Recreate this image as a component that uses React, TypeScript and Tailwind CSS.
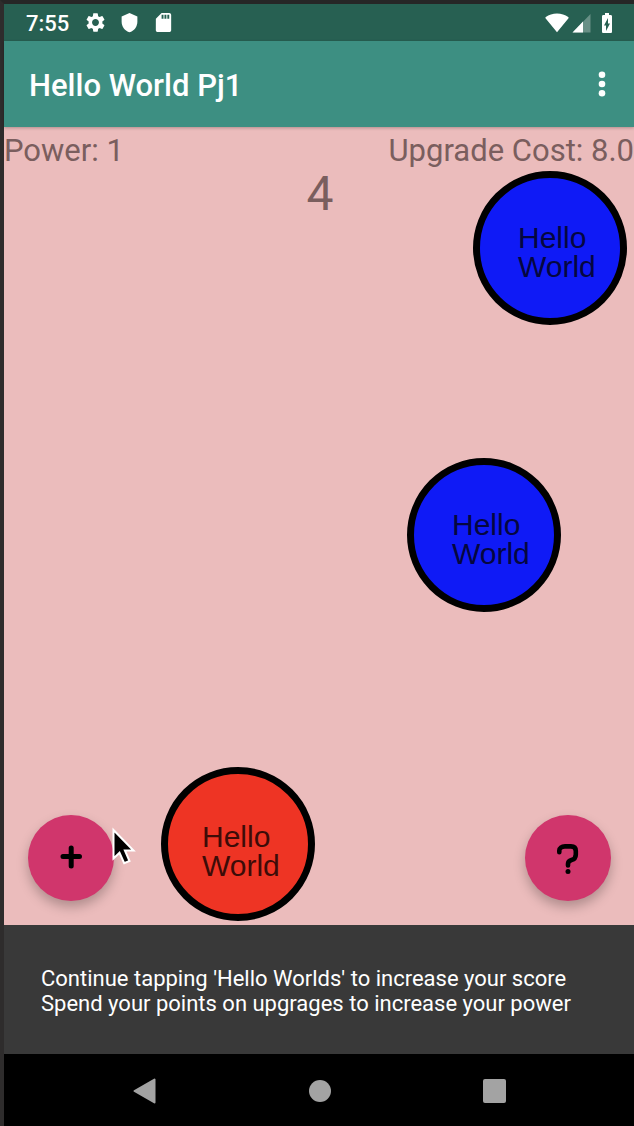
import { useState } from "react";
import { MdBatteryChargingFull, MdSdCard, MdSettings, MdShield } from "react-icons/md";

function WifiIcon() {
  return (
    <svg width="24" height="20" viewBox="0 0 24 20" fill="currentColor" aria-hidden="true">
      <path d="M12 19.2 0.5 5.2C0.2 4.8 0.4 4.4 0.8 4.1 3.8 1.8 7.8 0.6 12 0.6S20.2 1.8 23.2 4.1C23.6 4.4 23.8 4.8 23.5 5.2L12 19.2Z" />
    </svg>
  );
}

function SignalIcon() {
  return (
    <svg width="19" height="20" viewBox="0 0 19 20" fill="currentColor" aria-hidden="true">
      <path d="M0.5 19.5 18.5 1V19.5Z" opacity="0.3" />
      <path d="M0.5 19.5 11 8.4V19.5Z" />
    </svg>
  );
}

function StatusBar() {
  return (
    <div className="flex h-[37px] items-center justify-between bg-[#276052] pr-[15px] pl-[22px] text-white">
      <div className="flex items-center">
        <span className="w-[58px] pt-0.5 text-[22px] leading-7 font-medium">7:55</span>
        <div className="flex items-center gap-3">
          <MdSettings size={23} />
          <MdShield size={21} />
          <MdSdCard size={23} />
        </div>
      </div>
      <div className="flex items-center">
        <WifiIcon />
        <span className="ml-[3px]">
          <SignalIcon />
        </span>
        <MdBatteryChargingFull size={24} className="ml-1" />
      </div>
    </div>
  );
}

function AppBar() {
  return (
    <header className="z-10 flex h-[86px] items-center justify-between bg-[#3d8f82] pr-4 pl-[25px] text-white shadow-[0_1px_3px_rgba(0,0,0,0.25)]">
      <h1 className="pt-1 text-[31px] leading-9 font-medium">Hello World Pj1</h1>
      <button type="button" aria-label="More options" className="flex h-12 w-8 items-center justify-center">
        <svg width="8" height="26" viewBox="0 0 8 26" fill="currentColor" aria-hidden="true">
          <circle cx="4" cy="3.7" r="3.3" />
          <circle cx="4" cy="13" r="3.3" />
          <circle cx="4" cy="22.3" r="3.3" />
        </svg>
      </button>
    </header>
  );
}

function Bubble({ className, onTap }: { className: string; onTap: () => void }) {
  return (
    <button
      type="button"
      onClick={onTap}
      className={`absolute flex size-[154px] items-center rounded-full border-[7px] border-black text-left font-['Liberation_Sans',sans-serif] text-[30px] leading-[29px] ${className}`}
    >
      <span>
        Hello
        <br />
        World
      </span>
    </button>
  );
}

const fab =
  "absolute bottom-6 flex size-[86px] items-center justify-center rounded-full bg-[#d0366c] text-black shadow-[0_6px_12px_rgba(0,0,0,0.25)]";

export default function App() {
  const [score, setScore] = useState(4);
  const tap = () => setScore(score + 1);

  return (
    <div className="flex min-h-screen flex-col border-t-4 border-l-4 border-t-[#262626] border-l-[#2e2c2c] font-['Roboto',sans-serif]">
      <StatusBar />
      <AppBar />
      <main className="relative min-h-[640px] flex-1 bg-[#ebbcbc] pt-1.5 text-[#7a5e5e]">
        <div className="flex justify-between text-[31px] leading-[35px]">
          <p>Power: 1</p>
          <p>Upgrade Cost: 8.0</p>
        </div>
        <p className="pl-0.5 text-center text-[48px] leading-[52px]">{score}</p>

        <Bubble onTap={tap} className="top-11 right-[7px] bg-[#0f1af6] pt-2 pl-[38px] text-[#05073f]" />
        <Bubble onTap={tap} className="top-[331px] right-[73px] bg-[#0f1af6] pt-2 pl-[38px] text-[#05073f]" />
        <Bubble onTap={tap} className="bottom-1 left-[157px] bg-[#ee3424] pt-3.5 pl-[34px] text-[#3d0c08]" />

        <button type="button" aria-label="Upgrade power" className={`${fab} left-6`}>
          <svg width="86" height="86" viewBox="0 0 86 86" fill="none" stroke="currentColor" strokeWidth="5" strokeLinecap="round" aria-hidden="true">
            <path d="M35 41.5H51.5M43.2 33V51" />
          </svg>
        </button>
        <button type="button" aria-label="Help" className={`${fab} right-[23px]`}>
          <svg width="86" height="86" viewBox="0 0 86 86" fill="none" stroke="currentColor" strokeWidth="4.6" strokeLinecap="round" strokeLinejoin="round" aria-hidden="true">
            <path d="M34.3 37.2V35.5C34.3 33 36.5 31.4 40 31.4H46C49.5 31.4 50.8 33 50.8 36V39.5C50.8 43 48.5 44.5 46.5 45 44 45.8 43 47 43 49V50.5" />
            <circle cx="43" cy="56.5" r="2.5" fill="currentColor" stroke="none" />
          </svg>
        </button>

        <svg className="pointer-events-none absolute bottom-[58px] left-[106px]" width="26" height="40" viewBox="0 0 26 40" aria-hidden="true">
          <path d="M3.5 3V31.5L9.5 25.8L14.2 36.2L19.5 34L14.9 23.5H23.5Z" fill="#000" stroke="#fff" strokeWidth="2" />
        </svg>
      </main>

      <section role="status" className="flex h-[129px] items-center bg-[#393939] px-[37px] pt-[3px] text-[22px] leading-[25px] text-white">
        <p>
          Continue tapping 'Hello Worlds' to increase your score
          <br />
          Spend your points on upgrages to increase your power
        </p>
      </section>

      <nav className="grid h-[72px] grid-cols-3 items-center justify-items-center bg-black pt-0.5 pr-[52px] pl-[54px] text-[#a3a3a3]">
        <button type="button" aria-label="Back">
          <svg width="24" height="26" viewBox="0 0 24 26" fill="currentColor" stroke="currentColor" strokeWidth="2" strokeLinejoin="round" aria-hidden="true">
            <path d="M1.5 13 21.5 1.5V24.5Z" />
          </svg>
        </button>
        <button type="button" aria-label="Home" className="size-[22px] rounded-full bg-[#a3a3a3]" />
        <button type="button" aria-label="Recent apps" className="h-6 w-[23px] rounded-xs bg-[#a3a3a3]" />
      </nav>
    </div>
  );
}
